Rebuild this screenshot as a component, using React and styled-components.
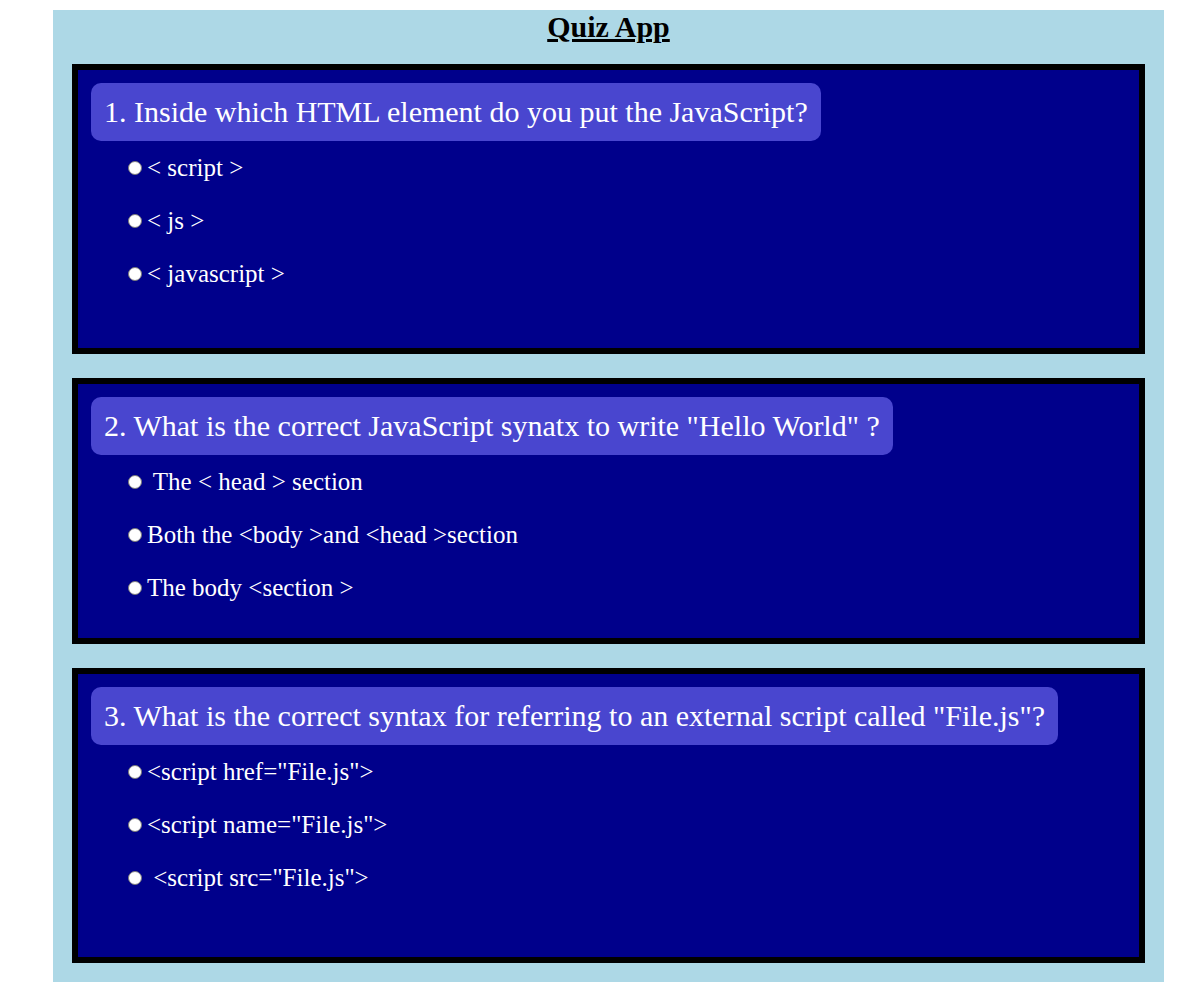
import styled, { createGlobalStyle } from "styled-components";

const questions = [
  {
    q: "1. Inside which HTML element do you put the JavaScript?",
    options: ["< script >", "< js >", "< javascript >"],
    bottom: 60,
  },
  {
    q: '2. What is the correct JavaScript synatx to write "Hello World" ?',
    options: [" The < head > section", "Both the <body >and <head >section", "The body <section >"],
    bottom: 36,
  },
  {
    q: '3. What is the correct syntax for referring to an external script called "File.js"?',
    options: ['<script href="File.js">', '<script name="File.js">', ' <script src="File.js">'],
    bottom: 65,
  },
];

export default function App() {
  return (
    <>
      <GlobalStyle />
      <Container>
        <Title>Quiz App</Title>
        {questions.map((item, i) => (
          <Card key={i} $bottom={item.bottom}>
            <Question>{item.q}</Question>
            <Options>
              {item.options.map((opt, j) => (
                <Option key={j}>
                  <Radio type="radio" name={"q" + i} />
                  <span>{opt}</span>
                </Option>
              ))}
            </Options>
          </Card>
        ))}
      </Container>
    </>
  );
}

const GlobalStyle = createGlobalStyle`
body{
    margin: 0;
    background: #fff;
    font-family: "Liberation Serif", "Times New Roman", serif;
}
`;

const Container = styled.div`
width: 1111px;
margin: 10px 0 0 53px;
padding: 0 19px 19px;
box-sizing: border-box;
background: lightblue;
`;

const Title = styled.h1`
margin: 0;
font-size: 30px;
line-height: 34px;
font-weight: bold;
text-align: center;
text-decoration: underline;
color: #000;
`;

const Card = styled.div`
margin-top: 20px;
& + & {
    margin-top: 24px;
}
border: 6px solid #000;
background: #00008b;
padding: 13px 13px ${(p) => p.$bottom}px;
`;

const Question = styled.div`
display: inline-block;
vertical-align: top;
background: #4946cf;
color: #fff;
font-size: 30px;
line-height: 34px;
padding: 12px 13px;
border-radius: 10px;
`;

const Options = styled.div`
display: flex;
flex-direction: column;
gap: 24px;
margin: 12px 0 0 37px;
`;

const Option = styled.label`
display: flex;
align-items: center;
height: 29px;
font-size: 25px;
color: #fff;
white-space: pre;
`;

const Radio = styled.input`
appearance: none;
-webkit-appearance: none;
box-sizing: border-box;
width: 14px;
height: 14px;
margin: 0 5px 0 0;
border-radius: 50%;
border: 1.5px solid #7a7a7a;
background: #fff;
`;
